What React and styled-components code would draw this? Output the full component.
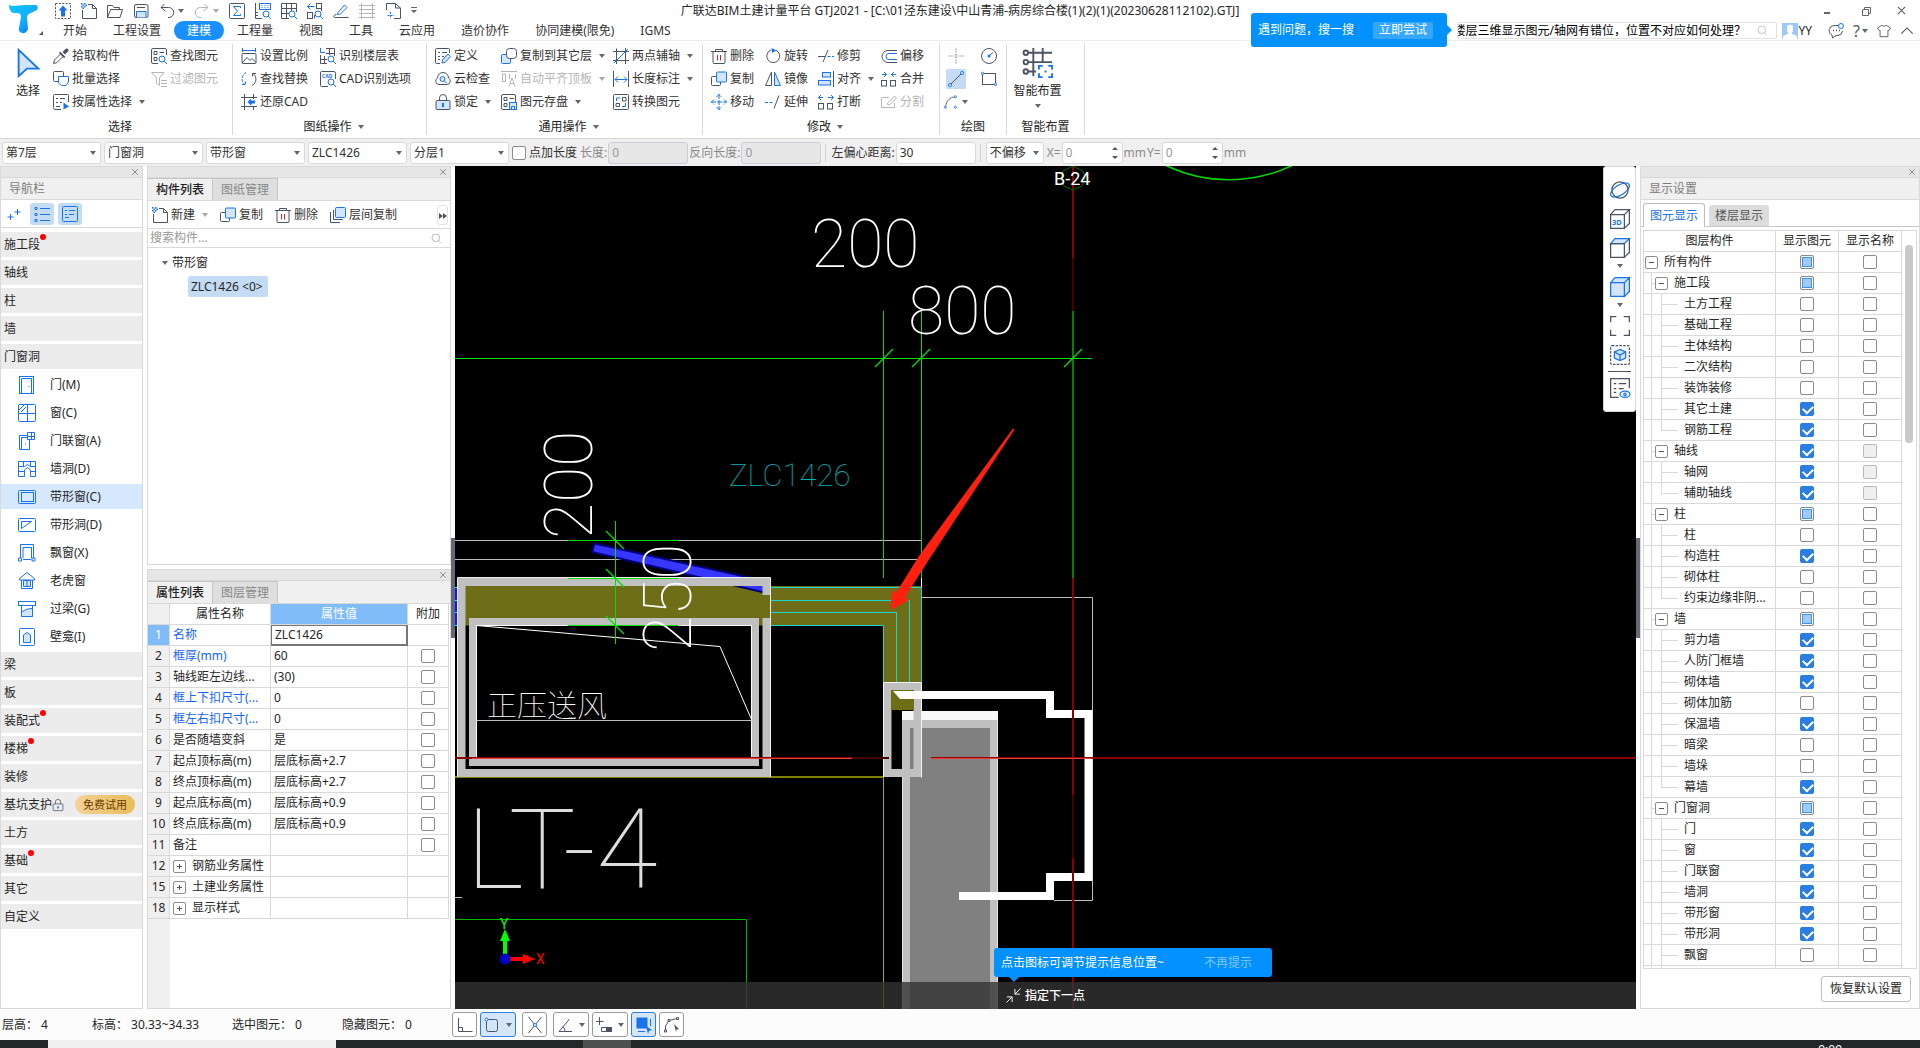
import React, { useEffect, useRef } from 'react'
import styled, { createGlobalStyle } from 'styled-components';

const ink = '#4b5464';
const blue = '#1a73e8';
const line = '#d9d9d9';

const GlobalStyle = createGlobalStyle`
    *{ box-sizing:border-box; }
    body{
        margin:0;
        overflow:hidden;
        color:#262626;
        background:#fff;
        font:12px/16px "Noto Sans", "Noto Sans CJK SC", sans-serif;
    }
    button, input, select{
        font:inherit;
        color:inherit;
        margin:0;
        padding:0;
        border:0;
        background:none;
    }
    button{ cursor:pointer; }
`;

const Svg = styled.svg`
    flex:none;
    display:block;
    overflow:visible;
    fill:none;
    stroke:${props => props.$muted ? '#b5b5b5' : ink};
    stroke-width:1;
    .b{ stroke:${props => props.$muted ? '#b5b5b5' : blue}; }
    .f{ fill:#d3e5fb; }
    .s{ fill:${props => props.$muted ? '#b5b5b5' : blue}; stroke:none; }
    .k{ fill:${ink}; stroke:none; }
    .w{ fill:#fff; }
    .r{ stroke:#d8202a; }
`;

const lens = <><circle className="b w" cx="11" cy="11" r="3" /><path className="b" d="M13.2 13.2 16 16" /></>;

/* every glyph is drawn on a 16 x 16 grid */
const glyphs = {
    upload: <><rect x=".5" y=".5" width="15" height="15" strokeDasharray="2 1.4" /><path className="s" d="M8 2.5 12.5 7.5H10V13.5H6V7.5H3.5Z" /></>,
    page: <><path d="M7 1.5H11.5L15.5 5.5V15.5H1.5V7" /><path d="M11.5 1.5V5.5H15.5" /><path className="s" d="M0 0h1.5v1.5H0zM3 0h1.5v1.5H3zM1.5 1.5h1.5V3H1.5zM4.5 1.5H6V3H4.5zM0 3h1.5v1.5H0zM3 3h1.5v1.5H3zM1.5 4.5h1.5V6H1.5z" /></>,
    folder: <><path d="M.5 14.5V2.5H5.5L7 4.5H12.5V6.5" /><path d="M.5 14.5 3.5 6.5H15.5L13 14.5Z" /></>,
    save: <><rect x="1.5" y="1.5" width="13.5" height="13" rx="1.5" /><path d="M4 4.5H12" /><path className="b f" d="M3.5 14.5V8.5H13V14.5" /></>,
    undo: <path d="M5.5 1 2 4.5 6.5 8M2 4.5H9.5A5 5 0 0 1 10 14.5H9" />,
    redo: <path d="M10.5 1 14 4.5 9.5 8M14 4.5H6.5A5 5 0 0 0 6 14.5H7" />,
    sum: <><rect x=".5" y=".5" width="15" height="15" rx="1" /><path className="b" d="M11.5 5V3.5H4.5L8.5 8 4.5 12.5H11.5V11" /></>,
    ruler: <><path d="M.5 0V15.5H7M.5 12.5H3M.5 9.5H3" /><rect className="b" x="4.5" y=".5" width="11" height="6" /><path className="b" d="M6.5 2.5h1M9.5 2.5h1M12.5 2.5h1M6.5 4.5h1M9.5 4.5h1M12.5 4.5h1" />{lens}</>,
    gridSearch: <><path d="M.5 .5H15.5V9M.5 .5V15.5H8M.5 5.5H15.5M.5 10.5H8M5.5 .5V15.5M10.5 .5V8" />{lens}</>,
    partSearch: <><path className="b" d="M.5 3.5H7.5M3.5 .5 .5 3.5 3.5 6.5" /><rect x="9.5" y=".5" width="5" height="5" /><rect x=".5" y="9.5" width="5" height="6" /><path d="M7.5 15.5V12M14.5 5.5V8" />{lens}</>,
    pencilLine: <><path className="b" d="M5 9.5 11.5 2 14 4.5 7.5 11 4.5 11.5Z" /><path d="M3.5 11.5C-1 12.5 0 14.5 3 14.5H15.5" /></>,
    fence: <path d="M2.5 0V16M13.5 0V16M0 2.5H16M0 6.5H16M0 10.5H16M0 14.5H16" />,
    docPlus: <><path d="M1.5 7V.5H10.5L15.5 5V15.5H9M10.5 .5V5H15.5" /><path className="b" d="M5.5 9V15.5M2.5 12.5H9" strokeDasharray="2 1" /></>,

    dropper: <><path d="M.5 15.5 1.5 12 8 5.5 10.5 8 4 14.5Z" /><path className="k" d="M7 3.5 12.5 9 11 10 6 5ZM9.5 4 13 .5A2 2 0 0 1 15.5 3L12 6.5Z" /></>,
    batch: <><rect x=".5" y=".5" width="10" height="10" rx="1" /><path className="b w" d="M5.5 5.5H15.5V11L13 14.5H8.5L5.5 12Z" /></>,
    byAttr: <><path d="M15.5 8V1.5Q15.5 .5 14.5 .5H1.5Q.5 .5 .5 1.5V13.5Q.5 15 2 15.5H8" /><path d="M3 4.5H5M7 4.5H12M3 8.5H5M7 8.5H9M3 12.5H7" /><path className="s" d="M10.5 8.5 16 12.5 10.5 15.5Z" /></>,
    findPart: <><rect x=".5" y=".5" width="15" height="15" rx="1.5" /><path d="M3 3.5h3v3H3zM3 9.5h3v3H3zM8.5 4.5H13" /><rect x="7" y="7" width="9" height="9" fill="#fff" stroke="none" />{lens}</>,
    filter: <path d="M.5 1.5H13L8.5 7V14.5L5.5 12.5V7ZM10 9.5H16M10 12.5H16M10 15.5H16" />,
    scale: <><path className="b" d="M1.5 0V4M14.5 0V4M2 2.5H14" /><rect x="1" y="5.5" width="14" height="10" rx="1" /><path d="M1 15 6 9.5 9 12.5 11 10.5 15 14.5" /></>,
    swap: <><path className="b" d="M5 1.5A7 7 0 0 0 4 13.5M1 13.5H4.5V10.5" strokeDasharray="3 1" /><path d="M11 14.5A7 7 0 0 0 12 2.5M15 2.5H11.5V5.5" /></>,
    restore: <><path d="M3.5 0V16M0 3.5H16M0 12.5H16M12.5 0V5M12.5 12V16" /><path className="s" d="M6.5 8 10 4.5V6.5H14V9.5H11L10 11.5Z" /></>,
    floorTable: <><path className="b" d="M.5 0V4.5H5" /><path d="M6 .5H14.5V8M6 5.5H14.5M9.5 .5V7M.5 7V15.5H7M.5 11.5H7M4.5 8V15.5" />{lens}</>,
    cad: <><path d="M15.5 8V2.5Q15.5 .5 14 .5H1.5Q.5 .5 .5 2V14.5Q.5 15.5 1.5 15.5H8" /><text className="s" x="2" y="7" fontSize="5" fontWeight="700">CAD</text>{lens}</>,
    define: <><path d="M14.5 5V1.5Q14.5 .5 13.5 .5H1.5Q.5 .5 .5 1.5V14.5Q.5 15.5 1.5 15.5H5" /><path d="M3 4.5H5M7 4.5H12M3 8.5H5M7 8.5H9M3 11.5H5" /><path className="b f" d="M7.5 12 13 6 15.5 8.5 10 14.5 7 15Z" /></>,
    cloud: <><path d="M3.5 13.5A3.5 3.5 0 0 1 2.5 7A5.5 5.5 0 0 1 13.5 7A3.5 3.5 0 0 1 12.5 13.5Z" /><circle className="b f" cx="7.5" cy="8" r="2.5" /><path className="b" d="M9.5 10 12 12.5" /></>,
    lock: <><path d="M4.5 6V4A3.5 3.5 0 0 1 11.5 4V6" /><rect className="f" x="1" y="6.5" width="14" height="9" rx="1" /><path className="b" d="M8 9V13" strokeWidth="2" /></>,
    copy: <><rect x=".5" y="5.5" width="9" height="9" rx="1" /><rect className="b f" x="5.5" y="1" width="10" height="10" rx="1" /></>,
    copyTo: <><rect className="b f" x=".5" y="6.5" width="9" height="9" rx="1" /><rect className="w" x="5.5" y=".5" width="10" height="10" rx="3" /></>,
    alignTop: <path d="M0 .5H16M1.5 3V10.5H4.5V3ZM8.5 3V8M8 15.5 11 7 14 15.5M9 12.5H13M14.5 3V8" />,
    store: <><rect x=".5" y=".5" width="14" height="15" rx="1.5" /><path d="M3 3.5h3v3H3zM3 9.5h3v3H3zM8.5 4.5H13" /><rect className="b f" x="8.5" y="8.5" width="7" height="7" /><path className="b" d="M10.5 15V12.5H13.5V15" /></>,
    twoPoint: <><path d="M3.5 .5V16M12.5 0V16M0 3.5H16M0 12.5H16" /><path className="b" d="M1 15 15 1" /></>,
    lengthDim: <><path d="M.5 0V16M15.5 0V16" /><path className="b" d="M2 8.5H14M5 5.5 2 8.5 5 11.5M11 5.5 14 8.5 11 11.5" /></>,
    convert: <><rect x=".5" y=".5" width="15" height="15" rx="1" /><path d="M3 9.5h3.5v3H3zM9.5 3.5H13v3.5H9.5z" /><path className="b" d="M3.5 7V4H7M12.5 9V12.5H9" /></>,
    trash: <><path d="M0 3.5H16M4.5 3.5V1.5H11.5V3.5M2 3.5V14.5Q2 15.5 3 15.5H13Q14 15.5 14 14.5V3.5" /><path className="r" d="M6.5 7V12.5M9.5 7V12.5" /></>,
    rotate: <><path d="M11 2.2A6.5 6.5 0 1 1 6 2" /><path className="s" d="M6.5 0 11.5 2.5 7 5Z" /></>,
    trim: <><path d="M5 14 10 2M0 8.5H7" /><path className="b" d="M9.5 8.5H16" strokeDasharray="3 1.5" /></>,
    offset: <><path d="M16 2.5H7A6 6 0 0 0 7 14.5H16" /><path className="b" d="M16 5.5H8A3 3 0 0 0 8 11.5H16" /></>,
    mirror: <><path d="M6.5 1V14.5H.5Z" /><path className="b f" d="M9.5 1V14.5H15.5Z" /></>,
    align: <><path d="M15.5 0V16" /><rect className="b f" x="4.5" y="1.5" width="8" height="4.5" /><rect className="b f" x=".5" y="9.5" width="12" height="4.5" /></>,
    merge: <><rect x=".5" y="9.5" width="5" height="5.5" /><rect x="9.5" y="9.5" width="5" height="5.5" /><path className="b" d="M1 3.5H5.5M3 1 5.5 3.5 3 6M15 3.5H10.5M13 1 10.5 3.5 13 6" /></>,
    move: <path className="b" d="M8 0V16M0 8H16M5.5 3 8 .5 10.5 3M5.5 13 8 15.5 10.5 13M3 5.5 .5 8 3 10.5M13 5.5 15.5 8 13 10.5" strokeDasharray="5 1" />,
    extend: <><path className="b" d="M0 8.5H9" strokeDasharray="3 1.5" /><path d="M9 14.5 14 1.5" /></>,
    breakAt: <><rect x=".5" y="9.5" width="5" height="5.5" /><rect x="9.5" y="9.5" width="5" height="5.5" /><path className="b" d="M.5 3.5H5M3 1 .5 3.5 3 6M15.5 3.5H10M13 1 15.5 3.5 13 6" /></>,
    split: <><path d="M8 3.5H1.5Q.5 3.5 .5 4.5V13.5H13.5V9" /><path d="M6 10 13.5 2 15.5 4 8.5 11Z" /></>,
    point: <path d="M8 0V5M8 11V16M0 8H5M11 8H16M7 6.5h2v3H7z" />,
    circle: <><circle cx="8" cy="8" r="7.5" /><path d="M8 8 12 4.5" /><circle className="s" cx="8" cy="8" r="1.5" /></>,
    segment: <><path d="M3 13 13 3" /><circle className="b w" cx="2" cy="14" r="1.5" /><circle className="b w" cx="14" cy="2" r="1.5" /></>,
    rect: <><rect x="1.5" y="2.5" width="13" height="11" /><circle className="b w" cx="1.5" cy="2.5" r="1.2" /><circle className="b w" cx="14.5" cy="13.5" r="1.2" /></>,
    arc: <><path d="M2 13C3 6 6 3 13 2" /><circle className="b w" cx="1.5" cy="14" r="1.2" /><circle className="b w" cx="13" cy="2" r="1.2" /><circle className="b w" cx="13" cy="14" r="1.2" /></>,
    pointer: <path className="b f" d="M3 1V15L7.5 11H13.5Z" />,
    smart: <><path d="M3 2.5H15.5M3 7.5H15.5M3 12.5H7M5.5 0V15M10.5 0V7" /><circle className="w" cx="1.5" cy="2.5" r="1.2" /><circle className="w" cx="1.5" cy="7.5" r="1.2" /><circle className="w" cx="1.5" cy="12.5" r="1.2" /><path className="b" d="M8.5 11.5V9.5H10.5M13.5 9.5H15.5V11.5M15.5 13.5V15.5H13.5M10.5 15.5H8.5V13.5M11.5 12.5h1" /></>,

    sparks: <path className="b" d="M4.5 8V14M1.5 11H7.5M11.5 3V9M8.5 6H14.5" />,
    bullets: <><path className="b" d="M6 2.5H16M6 8.5H16M6 14.5H16" /><path className="b" d="M1 1.5h2v2H1zM1 7.5h2v2H1zM1 13.5h2v2H1z" /></>,
    card: <><rect className="b" x=".5" y=".5" width="15" height="15" rx="1" /><path className="b" d="M3 4.5H5M7 4.5H13M3 8.5H5M7 8.5H12M3 11.5H7" /></>,
    door: <><rect className="b" x=".5" y="-.5" width="14" height="17" /><path className="b" d="M2.5 16.5V1.5H12.5V16.5M9.5 9.5h1" /></>,
    window: <><rect className="b" x="-.5" y="-.5" width="17" height="17" rx="1" /><path className="b" d="M8.5 0V16M0 8.5H16M0 5 5 0M2 7 7 2" /></>,
    doorWindow: <path className="b" d="M8.5 2.5H.5V16.5H10.5V7M2.5 16.5V4.5H8M8.5 -.5H15.5V6.5H8.5ZM12.5 0V6.5M8.5 3.5H15.5M6 11h1" />,
    wallHole: <path className="b" d="M-.5 .5H16.5V15.5H11.5V9L8.5 6.5 5.5 9V15.5H-.5ZM-.5 5.5H5.5L8.5 3.5 11.5 5.5H16.5M-.5 10.5H5M11 10.5H16.5M4.5 .5V5.5M11.5 .5V5.5" />,
    stripWindow: <><rect className="b" x="-.5" y="1.5" width="17" height="13" rx="1" /><rect className="b" x="2.5" y="3.5" width="12" height="9" /></>,
    stripHole: <><rect className="b" x="-.5" y="1.5" width="17" height="13" rx="1" /><path className="b" d="M2.5 11.5V4.5H12.5Z" /></>,
    bay: <><path className="b" d="M1.5 13V-.5H14.5V13M4 13V2.5H12.5V13M4 14.5H12" /><path className="b" d="M-.5 13h3v3H-.5zM13 13h3v3H13z" /></>,
    dormer: <><path className="b" d="M.5 5.5 8 -.5 15.5 5.5V7H.5ZM2.5 7V15.5H13.5V7" /><path className="b f" d="M4.5 7.5H11.5V13.5H4.5ZM8 7.5V13.5" /></>,
    lintel: <><rect className="b w" x="-.5" y=".5" width="17" height="4" /><path className="b f" d="M2.5 15.5V11C7 8 10 7.5 13.5 7.5V15.5Z" /><path className="b" d="M2.5 4V15.5M13.5 4V15.5" /></>,
    niche: <><rect className="b" x=".5" y="-.5" width="15" height="17" rx="1" /><path className="b f" d="M4.5 13.5V6L8 3.5 11.5 6V13.5Z" /></>,
    layers: <><rect className="b f" x="5.5" y=".5" width="10" height="10" rx="1" /><path d="M3.5 3V12.5H13M.5 5V15.5H10" /></>,
    search: <><circle cx="7" cy="7" r="5.5" /><path d="M11 11 14 14.5" /></>,
    padlock: <><path d="M4.5 7V4A3.5 3.5 0 0 1 11.5 4V7" /><rect x="1.5" y="6.5" width="13" height="9" rx="1" /><path className="b" d="M8 9.5V12.5" strokeWidth="2" /></>,

    orbit: <><circle cx="8" cy="8" r="6.5" /><ellipse className="b" cx="8" cy="8" rx="8.5" ry="4" transform="rotate(-32 8 8)" /></>,
    cube3d: <><path d="M.5 4.5H11.5V15.5H.5ZM.5 4.5 4 .5H15.5L11.5 4.5M15.5 .5V11.5L11.5 15.5" /><text className="s" x="1.5" y="13" fontSize="6" fontWeight="700">3D</text></>,
    cubeTop: <><path className="b f" d="M.5 4.5 4 .5H15.5L11.5 4.5Z" /><path d="M.5 4.5H11.5V15.5H.5ZM15.5 .5V11.5L11.5 15.5" /></>,
    cubeSolid: <path className="b f" d="M.5 4.5H11.5V15.5H.5ZM.5 4.5 4 .5H15.5L11.5 4.5M15.5 .5V11.5L11.5 15.5V4.5" />,
    frame: <path d="M.5 5V.5H5M11 .5H15.5V5M15.5 11V15.5H11M5 15.5H.5V11" />,
    cubeFrame: <><rect x=".5" y=".5" width="15" height="15" strokeDasharray="2 1" rx="1" /><path className="b f" d="M8 3.5 12.5 5.5V10.5L8 12.5 3.5 10.5V5.5Z" /><path className="b" d="M3.5 5.5 8 8 12.5 5.5M8 8V12.5" /></>,
    listEye: <><path d="M15.5 8V.5H.5V15.5H7M3 4.5H5M7 4.5H13M3 8.5H5M7 8.5H11M3 11.5H5" /><ellipse className="b w" cx="12" cy="13" rx="4" ry="2.5" /><circle className="b" cx="12" cy="13" r="1" /></>,

    ortho: <path d="M1.5 1V14.5H15.5M1.5 10.5H5.5V14.5" />,
    snap: <><rect x="2.5" y="2.5" width="11" height="12" rx="2" /><circle className="b w" cx="2.5" cy="2.5" r="1.5" /></>,
    cross: <><path d="M1.5 0 14.5 16M14.5 0 1.5 16" /><circle className="b w" cx="8" cy="8" r="1.5" /></>,
    angle: <path d="M12.5 2 2 14.5H15M5.5 10A4 4 0 0 1 8 14" />,
    plusBar: <><path d="M3.5 0V8M0 4.5H7.5" /><path d="M5.5 10.5H15.5V14.5H5.5Z" /><path className="k" d="M10 10h6v5h-6z" /></>,
    pick: <><path className="s" d="M.5 .5H11.5V11.5H.5Z" /><path className="b" d="M14.5 2V9M2 14.5H9" /><path className="s" d="M10 9 16 13 13 14 12 17Z" /></>,
    node: <><path d="M1.5 13V9L5 3.5 13 1.5" /><path className="w" d="M.5 13h2v2h-2zM4 2.5h2v2H4zM12.5 .5h2v2h-2z" /><path className="k" d="M10 7 15 12 12.5 12.5 12 15Z" /></>,
    minimize: <path d="M3 10H9" strokeWidth="2" />,
    windows: <path d="M4.5 6.5H10.5V12.5H4.5ZM6.5 6V4.5H12.5V10.5H11" />,
    close: <path d="M3.5 3.5 12.5 12.5M12.5 3.5 3.5 12.5" strokeWidth="1.5" />,
    chat: <><path d="M11 2.5H6A5 5 0 0 0 4 12L4.5 15 8 12.5H10A5 5 0 0 0 14.5 8" /><path d="M5 7.5h1M8 7.5h1M11 7.5h1" strokeWidth="1.5" /><circle className="b w" cx="13" cy="3" r="2.5" /></>,
    shirt: <path d="M5.5 1.5Q8 4 10.5 1.5L15.5 4.5 13.5 7.5 12.5 7V14.5H3.5V7L2.5 7.5 .5 4.5Z" />,
    chevronUp: <path d="M1.5 11 8 4.5 14.5 11" strokeWidth="1.3" />,
    shrink: <path d="M15.5 .5 9.5 6.5M9.5 1V6.5H15M.5 15.5 6.5 9.5M1 9.5H6.5V15" stroke="#fff" />,
};

function Icon({ name, size = 16, muted }) {
    return (
        <Svg viewBox="0 0 16 16" width={size} height={size} $muted={muted} aria-hidden="true">{glyphs[name]}</Svg>
    )
}

const CaretShape = styled.span`
    flex:none;
    width:0;
    height:0;
    border:3px solid transparent;
    border-top:4px solid ${props => props.$light ? '#a8a8a8' : '#666'};
    border-bottom:0;
`;

/* ---------- title bar and menu ---------- */

const Shell = styled.div`
    display:flex;
    flex-direction:column;
    height:100vh;
`;

const Header = styled.header`
    display:grid;
    grid-template-columns:50px 1fr;
    grid-template-rows:21px 19px;
    border-bottom:1px solid #ececec;
    position:relative;
`;

const Logo = styled.div`
    grid-area:1/1/3/2;
    display:flex;
    align-items:flex-end;
    padding:0 0 5px 9px;
    svg{ display:block; }
`;

const TitleRow = styled.div`
    grid-area:1/1/2/3;
    display:grid;
    grid-template-columns:1fr auto 1fr;
    align-items:center;
`;

const QuickBar = styled.div`
    display:flex;
    align-items:center;
    gap:10px;
    padding-left:55px;
`;

const QuickButton = styled.button`
    display:flex;
    align-items:center;
    gap:3px;
`;

const WindowButtons = styled.div`
    display:flex;
    align-items:center;
    justify-content:flex-end;
    gap:21px;
    padding-right:12px;
    svg{ stroke:#666; }
`;

const MenuRow = styled.nav`
    grid-area:2/2/3/3;
    display:flex;
    align-items:center;
`;

const MenuTab = styled.button`
    height:19px;
    padding:0 13px;
    border-radius:10px;
    color:${props => props.$active ? '#fff' : '#333'};
    background:${props => props.$active ? '#1890ff' : 'none'};
`;

const HelpArea = styled.div`
    display:flex;
    align-items:center;
    margin-left:auto;
    padding-right:6px;
    gap:9px;
`;

const HelpSearch = styled.label`
    display:flex;
    align-items:center;
    width:320px;
    height:17px;
    padding-right:8px;
    border:1px solid #e2e2e2;
    border-radius:2px;
    input{
        flex:1;
        min-width:0;
        color:#000;
        text-indent:-5px;
        line-height:15px;
    }
    svg{ stroke:#aaa; }
`;

const Person = styled.button`
    display:flex;
    align-items:center;
    margin:0 7px 0 -4px;
`;

const Question = styled.button`
    display:flex;
    align-items:center;
    gap:2px;
    font-size:16px;
    color:#555;
`;

const Balloon = styled.div`
    position:absolute;
    top:13px;
    right:473px;
    display:flex;
    align-items:center;
    justify-content:space-between;
    width:196px;
    height:34px;
    padding:0 14px 0 7px;
    border-radius:3px;
    color:#fff;
    background:#0291ff;
    &::after{
        content:'';
        position:absolute;
        left:100%;
        top:12px;
        border:5px solid transparent;
        border-left-color:#0291ff;
        border-right:0;
    }
    button{
        height:17px;
        padding:0 6px;
        border-radius:2px;
        background:#35a7ff;
    }
`;

/* ---------- ribbon ---------- */

const Ribbon = styled.section`
    display:flex;
    height:98px;
    padding-top:3px;
    border-bottom:1px solid #d6d6d6;
`;

const Group = styled.div`
    height:91px;
    border-right:1px solid ${line};
    padding-left:${props => props.$pad ?? 8}px;
`;

const Tools = styled.div`
    display:grid;
    grid-template-columns:${props => props.$cols};
    grid-template-rows:repeat(3,23px);
    grid-auto-flow:column;
    align-items:center;
`;

const Caption = styled.div`
    display:flex;
    align-items:center;
    justify-content:center;
    gap:6px;
    height:22px;
    padding-top:5px;
`;

const Tool = styled.button`
    display:flex;
    align-items:center;
    gap:3px;
    height:23px;
    white-space:nowrap;
    color:${props => props.disabled ? '#b5b5b5' : '#333'};
    ${CaretShape}{ margin-left:4px; }
`;

const BigTool = styled.button`
    grid-row:1/4;
    display:flex;
    flex-direction:column;
    align-items:center;
    gap:5px;
    height:69px;
    padding:4px 5px 0 0;
`;

const DrawTool = styled.button`
    justify-self:center;
    display:flex;
    align-items:center;
    gap:4px;
    padding:2px;
    border-radius:2px;
    background:${props => props.$active ? '#c3dbf3' : 'none'};
`;

const ribbonGroups = [
    {
        title: '图纸操作', cols: '79px 106px', tools: [
            ['scale', '设置比例'], ['swap', '查找替换'], ['restore', '还原CAD'],
            ['floorTable', '识别楼层表'], ['cad', 'CAD识别选项'],
        ]
    },
    {
        title: '通用操作', cols: '66px 112px 89px', tools: [
            ['define', '定义'], ['cloud', '云检查'], ['lock', '锁定', 'menu'],
            ['copyTo', '复制到其它层', 'menu'], ['alignTop', '自动平齐顶板', 'menu off'], ['store', '图元存盘', 'menu'],
            ['twoPoint', '两点辅轴', 'menu'], ['lengthDim', '长度标注', 'menu'], ['convert', '转换图元'],
        ]
    },
    {
        title: '修改', cols: '54px 53px 63px 58px', tools: [
            ['trash', '删除'], ['copy', '复制'], ['move', '移动'],
            ['rotate', '旋转'], ['mirror', '镜像'], ['extend', '延伸'],
            ['trim', '修剪'], ['align', '对齐', 'menu'], ['breakAt', '打断'],
            ['offset', '偏移'], ['merge', '合并'], ['split', '分割', 'off'],
        ]
    },
];

function ToolItem({ tool }) {
    const [icon, label, flags = ''] = tool;
    const off = flags.includes('off');
    return (
        <Tool disabled={off}>
            <Icon name={icon} muted={off} />
            {label}
            {flags.includes('menu') && <CaretShape $light={off} />}
        </Tool>
    )
}

/* ---------- options bar ---------- */

const Options = styled.section`
    display:flex;
    align-items:center;
    height:27px;
    padding:0 2px;
    background:#f0f0f0;
    color:#333;
`;

const SelectBox = styled.span`
    display:grid;
    align-items:center;
    width:${props => props.$w || 99}px;
    height:22px;
    margin-right:3px;
    border:1px solid ${line};
    border-radius:3px;
    background:#fff;
    > *{ grid-area:1/1; }
    select{
        appearance:none;
        width:100%;
        padding-left:3px;
        outline:0;
    }
    ${CaretShape}{
        justify-self:end;
        margin-right:4px;
        pointer-events:none;
    }
`;

const Field = styled.label`
    display:flex;
    align-items:center;
    gap:1px;
    margin-right:1px;
    color:${props => props.$muted ? '#8a8a8a' : '#333'};
`;

const CheckField = styled(Field)`
    gap:3px;
    margin-right:3px;
`;

const TextBox = styled.input`
    width:80px;
    height:22px;
    padding-left:3px;
    border:1px solid ${line};
    border-radius:3px;
    background:#fff;
    &:disabled{
        color:#999;
        border-color:#c9cfd8;
        background:#e7e7e7;
    }
`;

const Divider = styled.span`
    width:1px;
    height:18px;
    margin:0 5px 0 3px;
    background:#d2d2d2;
`;

const Spinner = styled.span`
    display:flex;
    align-items:center;
    width:61px;
    height:22px;
    padding-right:4px;
    border:1px solid ${line};
    border-radius:3px;
    background:#fff;
    input{
        flex:1;
        min-width:0;
        padding-left:3px;
        color:#999;
    }
    svg{ display:block; }
`;

const Check = styled.input`
    appearance:none;
    flex:none;
    display:block;
    width:14px;
    height:14px;
    border:1px solid #8b8b8b;
    border-radius:2px;
    background:#fff;
    &:checked{
        border-color:#2a7de1;
        background:#2a7de1;
    }
    &:checked::after{
        content:'';
        display:block;
        width:8px;
        height:5px;
        margin:2px 0 0 2px;
        border:solid #fff;
        border-width:0 0 2px 2px;
        transform:rotate(-45deg);
    }
    &:indeterminate{
        background:#9dcbfd;
        box-shadow:inset 0 0 0 1px #fff, inset 0 0 0 2px #3a91f0;
    }
    &:disabled{
        border-color:#b8b8b8;
        background:#efefef;
    }
`;

function Checkbox({ mixed, ...rest }) {
    const ref = useRef(null);
    useEffect(() => {
        ref.current.indeterminate = !!mixed;
    }, [mixed]);
    return <Check ref={ref} type="checkbox" {...rest} />
}

function Choice({ label, w }) {
    return (
        <SelectBox $w={w}>
            <select aria-label={label} defaultValue={label}>
                <option>{label}</option>
            </select>
            <CaretShape />
        </SelectBox>
    )
}

function Offset({ axis }) {
    return (
        <Field $muted>
            {axis}=
            <Spinner>
                <input defaultValue="0" />
                <svg width="6" height="14" viewBox="0 0 6 14" fill="#555"><path d="M0 4 3 1 6 4ZM0 10 3 13 6 10Z" /></svg>
            </Spinner>
            mm
        </Field>
    )
}

/* ---------- docked panels ---------- */

const Workspace = styled.main`
    flex:1;
    display:flex;
    min-height:0;
`;

const Panel = styled.section`
    display:flex;
    flex-direction:column;
    flex:${props => props.$flex || 'none'};
    width:${props => props.$w ? props.$w + 'px' : 'auto'};
    height:${props => props.$h ? props.$h + 'px' : 'auto'};
    min-height:0;
    overflow:hidden;
    border:1px solid ${line};
    background:#fff;
`;

const Grip = styled.div`
    display:flex;
    flex:none;
    align-items:center;
    justify-content:flex-end;
    height:11px;
    padding-right:2px;
    border-bottom:1px solid ${line};
    background:#e6e6e6;
    svg{ stroke:#888; }
`;

const PanelTitle = styled.h2`
    flex:none;
    height:22px;
    margin:0;
    padding:3px 8px;
    border-bottom:1px solid ${line};
    font-size:12px;
    font-weight:400;
    color:#7c7c7c;
    background:#f0f0f0;
`;

const NavTools = styled.div`
    display:flex;
    flex:none;
    align-items:center;
    gap:4px;
    height:28px;
    margin-bottom:4px;
    padding-left:1px;
    border-bottom:1px solid ${line};
`;

const ToggleButton = styled.button`
    display:grid;
    place-items:center;
    width:24px;
    height:22px;
    border-radius:3px;
    background:${props => props.$on ? '#c3dbf3' : 'none'};
`;

const NavButton = styled.button`
    display:flex;
    flex:none;
    align-items:center;
    height:25px;
    margin-bottom:3px;
    padding-left:3px;
    text-align:left;
    background:#ececec;
`;

const NavLeaf = styled(NavButton)`
    gap:15px;
    padding-left:18px;
    background:${props => props.$active ? '#d5e8fe' : '#fff'};
`;

const Dot = styled.i`
    align-self:flex-start;
    width:6px;
    height:6px;
    margin-top:2px;
    border-radius:50%;
    background:#f00;
`;

const Trial = styled.span`
    margin-left:11px;
    padding:0 8px;
    border-radius:10px;
    font-size:11px;
    line-height:19px;
    color:#6b3a00;
    background:linear-gradient(90deg,#f5d296,#e8bc58);
`;

const navTop = [['施工段', true], ['轴线'], ['柱'], ['墙'], ['门窗洞']];
const navLeaves = [
    ['door', '门(M)'], ['window', '窗(C)'], ['doorWindow', '门联窗(A)'], ['wallHole', '墙洞(D)'],
    ['stripWindow', '带形窗(C)'], ['stripHole', '带形洞(D)'], ['bay', '飘窗(X)'], ['dormer', '老虎窗'],
    ['lintel', '过梁(G)'], ['niche', '壁龛(I)'],
];
const navBottom = [
    ['梁'], ['板'], ['装配式', true], ['楼梯', true], ['装修'], ['基坑支护', false, true],
    ['土方'], ['基础', true], ['其它'], ['自定义'],
];

function NavItem({ item }) {
    const [label, dot, trial] = item;
    return (
        <NavButton>
            {label}
            {dot && <Dot />}
            {trial && <><Icon name="padlock" size={12} /><Trial>免费试用</Trial></>}
        </NavButton>
    )
}

function Navigator() {
    return (
        <Panel $w={143}>
            <Grip><Icon name="close" size={10} /></Grip>
            <PanelTitle>导航栏</PanelTitle>
            <NavTools>
                <ToggleButton aria-label="添加"><Icon name="sparks" /></ToggleButton>
                <ToggleButton $on aria-label="列表"><Icon name="bullets" /></ToggleButton>
                <ToggleButton $on aria-label="卡片"><Icon name="card" /></ToggleButton>
            </NavTools>
            {navTop.map(item => <NavItem key={item[0]} item={item} />)}
            {navLeaves.map(([icon, label]) => (
                <NavLeaf key={label} $active={icon === 'stripWindow'}>
                    <Icon name={icon} />
                    {label}
                </NavLeaf>
            ))}
            {navBottom.map(item => <NavItem key={item[0]} item={item} />)}
        </Panel>
    )
}

const Middle = styled.div`
    display:flex;
    flex-direction:column;
    gap:4px;
    width:304px;
    margin-left:4px;
`;

const TabStrip = styled.div`
    display:flex;
    flex:none;
    height:23px;
    border-bottom:1px solid ${line};
    background:#f0f0f0;
`;

const DockTab = styled.button`
    padding:0 8px;
    border:1px solid #c6c6c6;
    border-width:1px 1px 0 0;
    font-weight:${props => props.$active ? 500 : 400};
    color:${props => props.$active ? '#222' : '#888'};
    background:${props => props.$active ? '#f0f0f0' : '#dedede'};
`;

const ListTools = styled.div`
    display:flex;
    flex:none;
    align-items:center;
    gap:12px;
    height:28px;
    padding:0 2px 0 4px;
    border-bottom:1px solid ${line};
`;

const More = styled.button`
    width:11px;
    height:20px;
    margin-left:auto;
    border:1px solid #e2e2e2;
    border-radius:3px;
`;

const PartSearch = styled.label`
    display:flex;
    flex:none;
    align-items:center;
    height:19px;
    padding:0 8px 0 2px;
    border-bottom:1px solid ${line};
    input{ flex:1; outline:0; }
    input::placeholder{ color:#999; }
    svg{ stroke:#999; }
`;

const TreeBranch = styled.button`
    display:flex;
    align-items:center;
    gap:4px;
    height:24px;
    margin:3px 0 0 14px;
`;

const TreeLeaf = styled.button`
    align-self:flex-start;
    height:21px;
    margin:1px 0 0 40px;
    padding:0 5px 0 3px;
    border-radius:2px;
    background:#c3dbf3;
`;

const GridTable = styled.table`
    flex:none;
    width:100%;
    table-layout:fixed;
    border-collapse:separate;
    border-spacing:0;
    th, td{
        height:21px;
        padding:0;
        border:solid ${line};
        border-width:0 1px 1px 0;
        font-weight:400;
        white-space:nowrap;
        overflow:hidden;
        line-height:18px;
    }
    ${Check}{ margin:0 auto; }
`;

const PropArea = styled.div`
    flex:1;
    background:linear-gradient(90deg,#f0f0f0 22px,#fff 22px);
    ${GridTable}{ width:301px; }
    tbody th{ background:#f0f0f0; }
    td{ padding-left:3px; }
    td:last-child{ padding:0; }
`;

const ValueHead = styled.th`
    color:#fff;
    background:#80bbfa;
`;

const NameCell = styled.td`
    color:${props => props.$key ? '#1463ff' : '#262626'};
`;

const FoldCell = styled.div`
    display:flex;
    align-items:center;
`;

const PropRow = styled.tr`
    &.current th{ color:#fff; background:#80bbfa; }
    &.current td:nth-child(3){
        border:solid #777;
        border-width:1px 2px 2px 1px;
    }
`;

const Fold = styled.button`
    display:grid;
    place-items:center;
    flex:none;
    width:13px;
    height:13px;
    margin-right:6px;
    border:1px solid #8b8b8b;
    border-radius:2px;
    background:#fff;
`;

function FoldBox({ plus }) {
    return (
        <Fold aria-label={plus ? '展开' : '收起'}>
            <Svg width="5" height="5" viewBox="0 0 5 5"><path d={plus ? 'M0 2.5H5M2.5 0V5' : 'M0 2.5H5'} /></Svg>
        </Fold>
    )
}

const properties = [
    [1, '名称', 'ZLC1426', 'key'], [2, '框厚(mm)', '60', 'key'], [3, '轴线距左边线...', '(30)'],
    [4, '框上下扣尺寸(...', '0', 'key'], [5, '框左右扣尺寸(...', '0', 'key'], [6, '是否随墙变斜', '是'],
    [7, '起点顶标高(m)', '层底标高+2.7'], [8, '终点顶标高(m)', '层底标高+2.7'],
    [9, '起点底标高(m)', '层底标高+0.9'], [10, '终点底标高(m)', '层底标高+0.9'], [11, '备注', ''],
    [12, '钢筋业务属性', '', 'fold'], [15, '土建业务属性', '', 'fold'], [18, '显示样式', '', 'fold'],
];

function PartPanels() {
    return (
        <Middle>
            <Panel $h={399}>
                <Grip><Icon name="close" size={10} /></Grip>
                <TabStrip>
                    <DockTab $active>构件列表</DockTab>
                    <DockTab>图纸管理</DockTab>
                </TabStrip>
                <ListTools>
                    <Tool><Icon name="page" />新建<CaretShape $light /></Tool>
                    <Tool><Icon name="copy" />复制</Tool>
                    <Tool><Icon name="trash" />删除</Tool>
                    <Tool><Icon name="layers" />层间复制</Tool>
                    <More aria-label="更多">
                        <svg width="8" height="6" viewBox="0 0 8 6" fill={ink}><path d="M0 0 4 3 0 6ZM4 0 8 3 4 6Z" /></svg>
                    </More>
                </ListTools>
                <PartSearch>
                    <input placeholder="搜索构件..." />
                    <Icon name="search" size={11} />
                </PartSearch>
                <TreeBranch><CaretShape />带形窗</TreeBranch>
                <TreeLeaf>ZLC1426 &lt;0&gt;</TreeLeaf>
            </Panel>
            <Panel $flex="1">
                <Grip><Icon name="close" size={10} /></Grip>
                <TabStrip>
                    <DockTab $active>属性列表</DockTab>
                    <DockTab>图层管理</DockTab>
                </TabStrip>
                <PropArea>
                    <GridTable>
                        <colgroup><col width="22" /><col width="101" /><col width="137" /><col width="41" /></colgroup>
                        <thead>
                            <tr><th /><th>属性名称</th><ValueHead>属性值</ValueHead><th>附加</th></tr>
                        </thead>
                        <tbody>
                            {properties.map(([no, name, value, kind]) => (
                                <PropRow key={no} className={no === 1 ? 'current' : ''}>
                                    <th>{no}</th>
                                    <NameCell $key={kind === 'key'}>
                                        {kind === 'fold' ? <FoldCell><FoldBox plus />{name}</FoldCell> : name}
                                    </NameCell>
                                    <td>{value}</td>
                                    <td>{no > 1 && no < 12 && <Checkbox aria-label={name} />}</td>
                                </PropRow>
                            ))}
                        </tbody>
                    </GridTable>
                </PropArea>
            </Panel>
        </Middle>
    )
}

const Splitter = styled.div`
    display:flex;
    flex:none;
    flex-direction:column;
    justify-content:center;
    width:4px;
    &::before{
        content:'';
        height:100px;
        background:#626b75;
    }
`;

/* ---------- drawing area ---------- */

const Stage = styled.section`
    position:relative;
    flex:1;
    min-width:0;
    overflow:hidden;
    background:#000;
`;

const Drawing = styled.svg`
    display:block;
    width:100%;
    height:100%;
    fill:none;
    text{
        stroke:none;
        font-family:Roboto, "Noto Sans CJK SC", sans-serif;
        font-weight:100;
    }
    .label{ font-weight:400; }
`;

const ViewBar = styled.div`
    position:absolute;
    top:0;
    right:0;
    display:flex;
    flex-direction:column;
    align-items:center;
    gap:9px;
    width:33px;
    height:246px;
    padding-top:13px;
    border:1px solid ${line};
    border-radius:3px;
    background:#fff;
    hr{
        width:23px;
        margin:-3px 0;
        border:0;
        border-top:1px solid ${ink};
    }
`;

const ViewButton = styled.button`
    display:flex;
    flex-direction:column;
    align-items:center;
    gap:6px;
`;

const Prompt = styled.div`
    position:absolute;
    left:0;
    right:0;
    bottom:0;
    display:flex;
    align-items:center;
    gap:4px;
    height:27px;
    padding-left:551px;
    font-weight:500;
    color:#fff;
    background:rgba(51,51,51,.8);
`;

const Hint = styled.div`
    position:absolute;
    left:539px;
    bottom:32px;
    display:flex;
    align-items:center;
    justify-content:space-between;
    width:278px;
    height:29px;
    padding:0 20px 0 7px;
    border-radius:3px;
    color:#fff;
    background:#0291ff;
    button{ color:#80c8ff; }
    &::after{
        content:'';
        position:absolute;
        top:100%;
        left:15px;
        border:5px solid transparent;
        border-top-color:#0291ff;
        border-bottom:0;
    }
`;

const tick = (x, y) => `M${x - 9} ${y + 9} ${x + 9} ${y - 9}`;
const backTick = (x, y) => `M${x - 9} ${y - 9} ${x + 9} ${y + 9}`;

function Plan() {
    return (
        <Drawing>
            {/* model coordinates start at 455,166 */}
            <g transform="translate(-455 -166)">
                {/* outlines of the facade */}
                <path stroke="#bdbdbd" d="M455 540.5H921M455 559.5H921M921 597.5H1092.5V900.5H1054" />
                <path stroke="#fff" d="M921.5 578V588" />
                <path stroke="#808000" strokeWidth="2" d="M455 777H883.5" />
                <path stroke="#a8a80a" d="M883.5 777V1010" />
                <path stroke="#00b400" d="M455 919.5H746.5V1010" />

                {/* walls and the strip window band */}
                <path fill="#6e6e18" d="M465 586H921.5V710H883.5V625.5H465Z" />
                <path fill="#000" d="M477 626H751V758H477ZM891 710H914V769H891ZM465 626H469V769H465Z" />
                <path fill="#3636ff" stroke="#00007c" strokeWidth="2" d="M594.5 543.5 770 582V590L762 592 592 552Z" />
                <path fill="#1414ff" d="M455 588H458V625H455Z" />
                <path stroke="#0ff" d="M455 587.5H458M455 600.5H458M455 612.5H458M455 625.5H458" />

                {/* frames of the shaft */}
                <path stroke="#c0c0c0" strokeWidth="8" d="M766.5 595V582H461.5V773H766.5V618" />
                <path stroke="#eee" d="M457.5 777V577.5H770.5V777" />
                <rect stroke="#c0c0c0" strokeWidth="8" x="473" y="622" width="282" height="140" />
                <path stroke="#fff" d="M476.5 758V625.5H751.5V758M476.5 625.5 720 646.5 751.5 719.5" />
                <path stroke="#bdbdbd" d="M476.5 720.5H751.5" />
                <path stroke="#18d8d0" d="M771 587.5H921.5V682M771 600.5H909.5V682M771 612.5H896.5V682M771 625.5H883.5V682" />

                {/* column */}
                <path fill="#f8f8f8" d="M902 711H998V720H902Z" />
                <path fill="#c0c0c0" d="M902 720H998V1010H902Z" />
                <path fill="#808080" d="M910 728H990V1010H910Z" />
                <path stroke="#e4e4e4" d="M902.5 777V1010M997.5 720V1010" />
                <path stroke="#c0c0c0" strokeWidth="8" d="M887.5 686H917.5V773H887.5Z" />
                <path stroke="#f4f4f4" d="M883.5 777V682.5H921.5V777.5" />
                <path fill="#6e6e18" d="M891 690H914V710H891Z" />
                <path fill="#fff" d="M893 691H1054V710H1092.5V881H1054V900H959V892H1046V873H1084.5V718H1046V699H900Z" />

                {/* axes */}
                <path stroke="#8b0000" strokeWidth="2" d="M1073 166V258M1073 578V1010M455 758H883M931 758H1640" />
                <path stroke="#450000" strokeWidth="2" d="M1073 258V311M1073 795V858M852 758H889" />
                <path stroke="#f03a3a" d="M472 758.5H852M931 758.5H1092" />
                <path stroke="#006a00" d="M1073 166 1083 171 1085 178 1082 186 1073 190 1064 186 1061 178 1063 171Z" />
                <path stroke="#008000" strokeWidth="2" d="M1073 311V578" />
                <path stroke="#00e000" d="M455 358.5H1092M883.5 311V578M921.5 311V578M615.5 521V644M568 540.5H678M568 578.5H678M568 625.5H678" />
                <path stroke="#00e000" strokeWidth="1.3" d={[tick(884, 358), tick(921, 358), tick(1073, 358), backTick(615, 540), backTick(615, 578), backTick(615, 625)].join('')} />
                <path stroke="#00d800" strokeWidth="1.5" d="M1166 165.5A146.5 146.5 0 0 0 1292 165.5" />

                {/* dimensions and marks */}
                <text x="811" y="267" fontSize="66" fill="#fff">200</text>
                <text x="908" y="334" fontSize="66" fill="#fff">800</text>
                <text transform="translate(592 539) rotate(-90)" fontSize="66" fill="#fff">200</text>
                <text transform="translate(691 652) rotate(-90)" fontSize="66" fill="#fff">250</text>
                <text x="729" y="486" fontSize="31" fill="#00b4b4">ZLC1426</text>
                <text x="466" y="888" fontSize="112" fill="#ddd">LT-4</text>
                <text x="487" y="716" fontSize="30" fill="#fff">正压送风</text>
                <text className="label" x="1054" y="185" fontSize="18" fill="#fff">B-24</text>
                <path stroke="#bdbdbd" d="M455 897.5H462" />

                {/* UCS marker */}
                <path stroke="#0f0" strokeWidth="4" d="M505 957V941" />
                <path fill="#0f0" d="M505 929 510 941H500Z" />
                <path stroke="#f00" strokeWidth="4" d="M508 959H523" />
                <path fill="#f00" d="M535 959 523 954V964Z" />
                <circle cx="505" cy="959" r="5.5" fill="#0000c0" />
                <text className="label" x="500" y="929" fontSize="14" fill="#0f0">Y</text>
                <text className="label" x="536" y="964" fontSize="14" fill="#f00">X</text>

                {/* pointer arrow */}
                <path fill="#ff2010" d="M1013 428.5 1014.5 429.5 928 561 905 597 909 600 890.5 610 892 590 896 593 919 556Z" />
            </g>
        </Drawing>
    )
}

const views = [['orbit'], ['cube3d'], ['cubeTop', true], ['cubeSolid', true], ['frame'], ['cubeFrame']];

function Canvas() {
    return (
        <Stage>
            <Plan />
            <Prompt><Icon name="shrink" size={15} />指定下一点</Prompt>
            <Hint>点击图标可调节提示信息位置~<button>不再提示</button></Hint>
            <ViewBar>
                {views.map(([name, menu]) => (
                    <ViewButton key={name} aria-label={name}>
                        <Icon name={name} size={20} />
                        {menu && <CaretShape />}
                    </ViewButton>
                ))}
                <hr />
                <ViewButton aria-label="list"><Icon name="listEye" size={20} /></ViewButton>
            </ViewBar>
        </Stage>
    )
}

/* ---------- display settings ---------- */

const ShowTabs = styled.div`
    display:flex;
    flex:none;
    align-items:flex-end;
    gap:4px;
    height:27px;
    padding-left:2px;
    border-bottom:1px solid #c6c9cf;
`;

const ShowTab = styled.button`
    height:${props => props.$active ? 24 : 21}px;
    padding:0 6px;
    border:${props => props.$active ? '1px solid #b9bec6' : '0'};
    border-bottom:0;
    border-radius:3px 3px 0 0;
    margin-bottom:${props => props.$active ? -1 : 0}px;
    color:${props => props.$active ? '#1a73e8' : '#555'};
    background:${props => props.$active ? '#fff' : '#dcdcdc'};
`;

const LayerArea = styled.div`
    display:flex;
    flex:1;
    align-items:flex-start;
    min-height:0;
    margin:3px 2px 0;
    overflow:hidden;
    border:1px solid ${line};
    ${GridTable}{
        flex:1;
        width:auto;
        min-width:0;
    }
`;

const Track = styled.div`
    width:14px;
    padding:14px 3px 0;
    &::before{
        content:'';
        display:block;
        height:198px;
        border-radius:4px;
        background:#c9c9c9;
    }
`;

const TreeCell = styled.div`
    display:flex;
    align-items:center;
    height:20px;
    padding-left:${props => props.$level ? 0 : 1}px;
`;

const Guide = styled.span`
    align-self:flex-start;
    flex:none;
    width:${props => props.$w}px;
    height:${props => props.$half ? 11 : 21}px;
    border-right:1px solid ${line};
`;

const Twig = styled.span`
    flex:none;
    width:${props => props.$w}px;
    height:1px;
    margin-right:${props => props.$gap || 0}px;
    background:${line};
`;

const PanelFoot = styled.div`
    display:flex;
    flex:none;
    justify-content:flex-end;
    padding:7px 8px 6px;
    button{
        height:26px;
        padding:0 8px;
        border:1px solid #bfbfbf;
        border-radius:3px;
    }
`;

/* level, name, shown: 1 / 0 / 'mixed', name box locked */
const layers = [
    [0, '所有构件', 'mixed'], [1, '施工段', 'mixed'],
    [2, '土方工程', 0], [2, '基础工程', 0], [2, '主体结构', 0], [2, '二次结构', 0], [2, '装饰装修', 0], [2, '其它土建', 1], [2, '钢筋工程', 1],
    [1, '轴线', 1, true], [2, '轴网', 1, true], [2, '辅助轴线', 1, true],
    [1, '柱', 'mixed'], [2, '柱', 0], [2, '构造柱', 1], [2, '砌体柱', 0], [2, '约束边缘非阴...', 0],
    [1, '墙', 'mixed'], [2, '剪力墙', 1], [2, '人防门框墙', 1], [2, '砌体墙', 1], [2, '砌体加筋', 0], [2, '保温墙', 1], [2, '暗梁', 0], [2, '墙垛', 0], [2, '幕墙', 1],
    [1, '门窗洞', 'mixed'], [2, '门', 1], [2, '窗', 1], [2, '门联窗', 1], [2, '墙洞', 1], [2, '带形窗', 1], [2, '带形洞', 1], [2, '飘窗', 0], [2, '', 0],
];

function LayerRow({ layer, last }) {
    const [level, name, shown, locked] = layer;
    return (
        <tr>
            <td>
                <TreeCell $level={level}>
                    {level > 0 && <Guide $w={8} />}
                    {level === 1 && <Twig $w={3} />}
                    {level === 2 && <><Guide $w={10} $half={last} /><Twig $w={16} $gap={6} /></>}
                    {level < 2 && <FoldBox />}
                    {name}
                </TreeCell>
            </td>
            <td><Checkbox aria-label={name} defaultChecked={shown === 1} mixed={shown === 'mixed'} /></td>
            <td><Checkbox aria-label={name} disabled={!!locked} /></td>
        </tr>
    )
}

function DisplaySettings() {
    return (
        <Panel $w={280}>
            <Grip><Icon name="close" size={10} /></Grip>
            <PanelTitle>显示设置</PanelTitle>
            <ShowTabs>
                <ShowTab $active>图元显示</ShowTab>
                <ShowTab>楼层显示</ShowTab>
            </ShowTabs>
            <LayerArea>
                <GridTable>
                    <colgroup><col /><col width="63" /><col width="63" /></colgroup>
                    <thead>
                        <tr><th>图层构件</th><th>显示图元</th><th>显示名称</th></tr>
                    </thead>
                    <tbody>
                        {layers.map((layer, i) => (
                            <LayerRow key={i} layer={layer} last={layers[i + 1] && layers[i + 1][0] < 2} />
                        ))}
                    </tbody>
                </GridTable>
                <Track />
            </LayerArea>
            <PanelFoot><button>恢复默认设置</button></PanelFoot>
        </Panel>
    )
}

/* ---------- status bar ---------- */

const StatusBar = styled.footer`
    display:flex;
    align-items:center;
    height:31px;
    padding-left:2px;
    background:#fcfcfc;
`;

const StatusItem = styled.span`
    display:flex;
    gap:3px;
    width:${props => props.$w}px;
`;

const StatusButton = styled.button`
    display:flex;
    align-items:center;
    justify-content:center;
    gap:6px;
    width:${props => props.$menu ? 36 : 25}px;
    height:25px;
    margin-right:${props => props.$gap}px;
    border:1px solid ${props => props.$on ? '#2a7de1' : '#999'};
    border-radius:3px;
    background:${props => props.$on ? '#d5e6fb' : '#fff'};
`;

const statusButtons = [
    ['ortho', 3], ['snap', 6, true, true], ['cross', 6], ['angle', 3, true], ['plusBar', 3, true], ['pick', 3, false, true], ['node', 0],
];

const Taskbar = styled.div`
    display:flex;
    height:8px;
    overflow:hidden;
    padding-left:48px;
    background:#232727;
    time{
        margin-left:auto;
        padding:2px 78px 0 0;
        color:#fff;
    }
`;

const TaskSlot = styled.span`
    width:${props => props.$w}px;
    margin-right:${props => props.$gap || 0}px;
    background:${props => props.$bg};
`;

export default function App() {
    return (
        <Shell>
            <GlobalStyle />
            <Header>
                <TitleRow>
                    <QuickBar>
                        {['upload', 'page', 'folder', 'save'].map(n => <QuickButton key={n} aria-label={n}><Icon name={n} /></QuickButton>)}
                        <QuickButton aria-label="undo"><Icon name="undo" /><CaretShape /></QuickButton>
                        <QuickButton aria-label="redo"><Icon name="redo" muted /><CaretShape $light /></QuickButton>
                        {['sum', 'ruler', 'gridSearch', 'partSearch', 'pencilLine'].map(n => <QuickButton key={n} aria-label={n}><Icon name={n} /></QuickButton>)}
                        <QuickButton aria-label="fence"><Icon name="fence" muted /></QuickButton>
                        <QuickButton aria-label="docPlus"><Icon name="docPlus" /></QuickButton>
                        <QuickButton aria-label="more">
                            <svg width="6" height="7" viewBox="0 0 6 7" fill="#666"><path d="M0 0H6V1H0ZM0 3H6L3 6Z" /></svg>
                        </QuickButton>
                    </QuickBar>
                    <span>广联达BIM土建计量平台 GTJ2021 - [C:\01泾东建设\中山青浦-病房综合楼(1)(2)(1)(20230628112102).GTJ]</span>
                    <WindowButtons>
                        <button aria-label="minimize"><Icon name="minimize" /></button>
                        <button aria-label="restore"><Icon name="windows" /></button>
                        <button aria-label="close"><Icon name="close" size={13} /></button>
                    </WindowButtons>
                </TitleRow>
                <Logo>
                    <svg width="34" height="30" viewBox="0 0 34 30">
                        <defs>
                            <linearGradient id="mark" x1="0" y1="0" x2="1" y2="1">
                                <stop offset="0" stopColor="#0fc4f5" />
                                <stop offset=".5" stopColor="#12b0ff" />
                                <stop offset="1" stopColor="#0a6cf0" />
                            </linearGradient>
                        </defs>
                        <path fill="url(#mark)" d="M0 0C6 2 10 0 15 0H27Q30 1 28 5L22 8Q18 9 18 13L19 24Q17 29 13 28 9 27 10 23L12 12Q12 8 8 8H4Q0 6 0 0Z" />
                        <path fill="#555" d="M34 26V30H30Z" />
                    </svg>
                </Logo>
                <MenuRow>
                    {['开始', '工程设置', '建模', '工程量', '视图', '工具', '云应用', '造价协作', '协同建模(限免)', 'IGMS'].map(name => (
                        <MenuTab key={name} $active={name === '建模'}>{name}</MenuTab>
                    ))}
                    <HelpArea>
                        <HelpSearch>
                            <input defaultValue="楼层三维显示图元/轴网有错位，位置不对应如何处理？" />
                            <Icon name="search" size={11} />
                        </HelpSearch>
                        <Person>
                            <svg width="16" height="16" viewBox="0 0 16 16"><path fill="#9dc8fa" d="M0 0H16V16H0Z" /><path fill="#fff" d="M5 3Q8 0 11 3V8L9.5 10.5 15 13V16H1V13L6.5 10.5 5 8Z" /></svg>
                            YY
                        </Person>
                        <button aria-label="chat"><Icon name="chat" /></button>
                        <Question>?<CaretShape /></Question>
                        <button aria-label="skin"><Icon name="shirt" size={14} /></button>
                        <button aria-label="collapse"><Icon name="chevronUp" size={14} /></button>
                    </HelpArea>
                </MenuRow>
                <Balloon>遇到问题，搜一搜<button>立即尝试</button></Balloon>
            </Header>

            <Ribbon>
                <Group>
                    <Tools $cols="45px 98px 81px">
                        <BigTool><Icon name="pointer" size={30} />选择</BigTool>
                        <ToolItem tool={['dropper', '拾取构件']} />
                        <ToolItem tool={['batch', '批量选择']} />
                        <ToolItem tool={['byAttr', '按属性选择', 'menu']} />
                        <ToolItem tool={['findPart', '查找图元']} />
                        <ToolItem tool={['filter', '过滤图元', 'off']} />
                    </Tools>
                    <Caption>选择</Caption>
                </Group>
                {ribbonGroups.map(group => (
                    <Group key={group.title}>
                        <Tools $cols={group.cols}>
                            {group.tools.map(tool => <ToolItem key={tool[1]} tool={tool} />)}
                        </Tools>
                        <Caption>{group.title}<CaretShape /></Caption>
                    </Group>
                ))}
                <Group $pad={0}>
                    <Tools $cols="32px 34px">
                        <DrawTool aria-label="点"><Icon name="point" muted /></DrawTool>
                        <DrawTool aria-label="直线" $active><Icon name="segment" /></DrawTool>
                        <DrawTool aria-label="弧"><Icon name="arc" size={14} /><CaretShape /></DrawTool>
                        <DrawTool aria-label="圆"><Icon name="circle" /></DrawTool>
                        <DrawTool aria-label="矩形"><Icon name="rect" /></DrawTool>
                    </Tools>
                    <Caption>绘图</Caption>
                </Group>
                <Group $pad={0}>
                    <Tools $cols="66px 11px">
                        <BigTool><Icon name="smart" size={30} />智能布置<CaretShape /></BigTool>
                    </Tools>
                    <Caption>智能布置</Caption>
                </Group>
            </Ribbon>

            <Options>
                {['第7层', '门窗洞', '带形窗', 'ZLC1426', '分层1'].map(name => <Choice key={name} label={name} />)}
                <CheckField><Checkbox />点加长度</CheckField>
                <Field $muted>长度:<TextBox disabled defaultValue="0" /></Field>
                <Field $muted>反向长度:<TextBox disabled defaultValue="0" /></Field>
                <Divider />
                <Field>左偏心距离:<TextBox defaultValue="30" /></Field>
                <Divider />
                <Choice label="不偏移" w={58} />
                <Offset axis="X" />
                <Offset axis="Y" />
            </Options>

            <Workspace>
                <Navigator />
                <PartPanels />
                <Splitter />
                <Canvas />
                <Splitter />
                <DisplaySettings />
            </Workspace>

            <StatusBar>
                <StatusItem $w={90}>层高：<span>4</span></StatusItem>
                <StatusItem $w={140}>标高：<span>30.33~34.33</span></StatusItem>
                <StatusItem $w={110}>选中图元：<span>0</span></StatusItem>
                <StatusItem $w={110}>隐藏图元：<span>0</span></StatusItem>
                {statusButtons.map(([name, gap, menu, on]) => (
                    <StatusButton key={name} aria-label={name} $gap={gap} $menu={menu} $on={on}>
                        <Icon name={name} />
                        {menu && <CaretShape />}
                    </StatusButton>
                ))}
            </StatusBar>
            <Taskbar>
                <TaskSlot $w={288} $gap={247} $bg="#f0f0f0" />
                <TaskSlot $w={48} $bg="#4f5151" />
                <time>9:09</time>
            </Taskbar>
        </Shell>
    )
}
